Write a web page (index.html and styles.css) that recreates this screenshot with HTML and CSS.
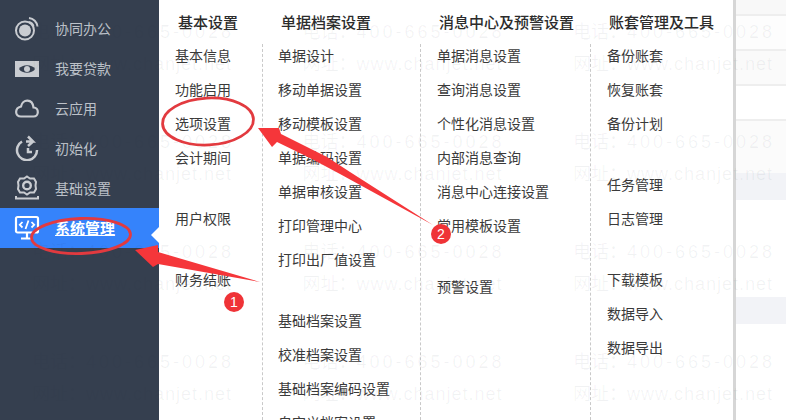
FILE: index.html
```html
<!DOCTYPE html>
<html lang="zh">
<head>
<meta charset="utf-8">
<title>系统管理</title>
<link rel="stylesheet" href="styles.css">
</head>
<body>
<div class="app">
  <nav class="sidebar">
    <a class="nav-item">
      <svg class="nav-icon" viewBox="0 0 26 26"><circle cx="11" cy="15.500" r="9" fill="none" stroke="currentColor" stroke-width="2"/><circle cx="11" cy="15.500" r="6" fill="currentColor"/><path d="M15 3A9.500 9.500 0 0 1 23.500 11.500M15 7A6 6 0 0 1 19.500 11.500" fill="none" stroke="currentColor" stroke-width="2"/></svg>
      <span>协同办公</span>
    </a>
    <a class="nav-item">
      <svg class="nav-icon" viewBox="0 0 26 26"><path d="M1 6H25V22H1Z" fill="currentColor"/><path d="M5 14C8 9 18 9 21 14C18 19 8 19 5 14Z" fill="#353f4f"/><circle cx="13" cy="14" r="3" fill="currentColor"/></svg>
      <span>我要贷款</span>
    </a>
    <a class="nav-item">
      <svg class="nav-icon" viewBox="0 0 26 26"><path d="M7 21.500H19.500C25 21.500 25.500 13 19.500 12.500C18.500 3.500 8.500 3.500 7 11.500C.5 13 .5 21.500 7 21.500Z" fill="none" stroke="currentColor" stroke-width="2.200"/></svg>
      <span>云应用</span>
    </a>
    <a class="nav-item">
      <svg class="nav-icon" viewBox="0 0 26 26"><path d="M8 6.500A10 10 0 1 0 23 15" fill="none" stroke="currentColor" stroke-width="2.500"/><path d="M12 6.500H19L14 1.500M19 6.500L14 11" fill="none" stroke="currentColor" stroke-width="2.500"/><path d="M14 13V17H18" fill="none" stroke="currentColor" stroke-width="2.500"/></svg>
      <span>初始化</span>
    </a>
    <a class="nav-item">
      <svg class="nav-icon" viewBox="0 0 26 26"><path d="M13 1.500L16 3.500L20 3.500L22 7L21.500 10.500L22 14L20 17.500L16 17.500L13 19.500L10 17.500L6 17.500L4 14L4.500 10.500L4 7L6 3.500L10 3.500Z" fill="none" stroke="currentColor" stroke-width="2"/><circle cx="13" cy="10.500" r="3.800" fill="none" stroke="currentColor" stroke-width="2.400"/><path d="M2 21V23.500H24V21" fill="none" stroke="currentColor" stroke-width="2"/></svg>
      <span>基础设置</span>
    </a>
    <a class="nav-item nav-item-active">
      <svg class="nav-icon" viewBox="0 0 26 26"><rect x="2" y="2" width="22" height="15.500" rx="1.500" fill="none" stroke="currentColor" stroke-width="2.200"/><path d="M8.500 7L5.800 9.800L8.500 12.500M17.500 7L20.200 9.800L17.500 12.500M14.500 5.500L11.500 14" fill="none" stroke="currentColor" stroke-width="1.800"/><path d="M13 17.500V23M7 23.500H19" fill="none" stroke="currentColor" stroke-width="2.200"/></svg>
      <span>系统管理</span>
    </a>
  </nav>

  <section class="menu">
    <div class="menu-col menu-col-1">
      <h3 class="menu-title">基本设置</h3>
      <div class="menu-list">
        <ul class="menu-group"><li>基本信息</li><li>功能启用</li><li>选项设置</li><li>会计期间</li></ul>
        <ul class="menu-group"><li>用户权限</li></ul>
        <ul class="menu-group"><li>财务结账</li></ul>
      </div>
    </div>
    <div class="menu-col menu-col-2">
      <h3 class="menu-title">单据档案设置</h3>
      <div class="menu-list">
        <ul class="menu-group"><li>单据设计</li><li>移动单据设置</li><li>移动模板设置</li><li>单据编码设置</li><li>单据审核设置</li><li>打印管理中心</li><li>打印出厂值设置</li></ul>
        <ul class="menu-group"><li>基础档案设置</li><li>校准档案设置</li><li>基础档案编码设置</li><li>自定义档案设置</li></ul>
      </div>
    </div>
    <div class="menu-col menu-col-3">
      <h3 class="menu-title">消息中心及预警设置</h3>
      <div class="menu-list">
        <ul class="menu-group"><li>单据消息设置</li><li>查询消息设置</li><li>个性化消息设置</li><li>内部消息查询</li><li>消息中心连接设置</li><li>常用模板设置</li></ul>
        <ul class="menu-group"><li>预警设置</li></ul>
      </div>
    </div>
    <div class="menu-col menu-col-4">
      <h3 class="menu-title">账套管理及工具</h3>
      <div class="menu-list">
        <ul class="menu-group"><li>备份账套</li><li>恢复账套</li><li>备份计划</li></ul>
        <ul class="menu-group"><li>任务管理</li><li>日志管理</li></ul>
        <ul class="menu-group"><li>下载模板</li><li>数据导入</li><li>数据导出</li></ul>
      </div>
    </div>
  </section>

  <aside class="backdrop">
    <div class="row row-a"></div>
    <div class="row row-b"></div>
    <div class="row row-c"></div>
    <div class="row row-d"></div>
    <div class="row row-e"></div>
    <div class="row row-band"></div>
    <div class="row row-f"></div>
    <div class="row row-band"></div>
  </aside>
</div>

<div class="watermarks">
  <div class="wm"><p>电话：<span class="wm-tel">400-665-0028</span></p><p>网址：<span class="wm-url">www.chanjet.net</span></p></div>
  <div class="wm"><p>电话：<span class="wm-tel">400-665-0028</span></p><p>网址：<span class="wm-url">www.chanjet.net</span></p></div>
  <div class="wm"><p>电话：<span class="wm-tel">400-665-0028</span></p><p>网址：<span class="wm-url">www.chanjet.net</span></p></div>
  <div class="wm"><p>电话：<span class="wm-tel">400-665-0028</span></p><p>网址：<span class="wm-url">www.chanjet.net</span></p></div>
  <div class="wm"><p>电话：<span class="wm-tel">400-665-0028</span></p><p>网址：<span class="wm-url">www.chanjet.net</span></p></div>
  <div class="wm"><p>电话：<span class="wm-tel">400-665-0028</span></p><p>网址：<span class="wm-url">www.chanjet.net</span></p></div>
  <div class="wm"><p>电话：<span class="wm-tel">400-665-0028</span></p><p>网址：<span class="wm-url">www.chanjet.net</span></p></div>
  <div class="wm"><p>电话：<span class="wm-tel">400-665-0028</span></p><p>网址：<span class="wm-url">www.chanjet.net</span></p></div>
  <div class="wm"><p>电话：<span class="wm-tel">400-665-0028</span></p><p>网址：<span class="wm-url">www.chanjet.net</span></p></div>
  <div class="wm"><p>电话：<span class="wm-tel">400-665-0028</span></p><p>网址：<span class="wm-url">www.chanjet.net</span></p></div>
  <div class="wm"><p>电话：<span class="wm-tel">400-665-0028</span></p><p>网址：<span class="wm-url">www.chanjet.net</span></p></div>
  <div class="wm"><p>电话：<span class="wm-tel">400-665-0028</span></p><p>网址：<span class="wm-url">www.chanjet.net</span></p></div>
</div>

<svg class="annotations" viewBox="0 0 786 420">
  <ellipse class="ring" cx="81" cy="236" rx="49.500" ry="17.500" transform="rotate(-2 81 236)"/>
  <ellipse class="ring" cx="208" cy="121.500" rx="45.500" ry="23.500" transform="rotate(-3 208 121.500)"/>
  <polygon class="arrow" points="135,250 158,245 158,252 260,282 158,264 153,267"/>
  <polygon class="arrow" points="258,128 279,128 281,134 327,157 350,172 433,225 340,174 310,158 277,142 272,147"/>
</svg>
<div class="badge badge-1">1</div>
<div class="badge badge-2">2</div>
</body>
</html>
```
FILE: styles.css
```css
* { box-sizing: border-box; }
html, body { margin: 0; height: 100%; overflow: hidden; background: #fff; }
body { position: relative; font-family: "Noto Sans CJK SC", "Liberation Sans", sans-serif; font-size: 14px; color: #333; }
h3, ul, p { margin: 0; padding: 0; }
ul { list-style: none; }

.app { display: flex; height: 420px; overflow: hidden; }

.sidebar { flex: 0 0 159px; padding-top: 8px; background: #353f4f; color: #bcc1c8; }
.nav-item { position: relative; display: flex; align-items: center; gap: 15px; height: 40px; padding-left: 14px; line-height: 20px; }
.nav-icon { display: block; flex: 0 0 26px; width: 26px; height: 26px; color: #c9ccd1; }
.nav-item-active { background: #3583fb; color: #fff; font-size: 15px; font-weight: 700; text-decoration: underline; }
.nav-item-active .nav-icon { color: #fff; }
.nav-item-active::after { content: ""; position: absolute; right: 0; top: 19px; border: 8px solid transparent; border-left-width: 0; border-right-color: #fff; }

.menu { flex: 0 0 577px; display: grid; grid-template-columns: 103px 158px 170px 143px; background: #fff; border-right: 3px solid #d6d6d6; }
.menu-col { min-width: 0; }
.menu-title { height: 44px; padding: 11px 0 0 19px; font-size: 15px; line-height: 22px; font-weight: 500; white-space: nowrap; color: #2c2c2c; }
.menu-list { height: 376px; overflow: hidden; padding: 0 0 0 16px; border-left: 1px dashed #c9c9c9; }
.menu-col-1 .menu-list { border-left: 0; }
.menu-col-2 .menu-list { padding-left: 15px; }
.menu-group { margin-bottom: 27px; }
.menu-group li { height: 34px; line-height: 22px; white-space: nowrap; color: #3a3a3a; }

.backdrop { flex: 1; min-width: 0; background: #fff; }
.row { border-bottom: 2px solid #eeeeee; }
.row-a { height: 16px; background: #f8f8f8; }
.row-b { height: 35px; background: #fdfdfd; }
.row-c { height: 35px; background: #fafafa; }
.row-d { height: 35px; background: #fff; }
.row-e { height: 52px; background: #fbfbfb; border-bottom: 0; }
.row-band { height: 27px; background: #f2f3f7; border-bottom: 0; }
.row-f { height: 97px; background: #fff; border-bottom: 0; }

.watermarks { position: absolute; left: 32px; top: 15px; width: 754px; height: 405px; overflow: hidden; display: grid; grid-template-columns: repeat(3, 270.500px); grid-auto-rows: 110px; color: rgba(45, 55, 75, .06); font-size: 18px; line-height: 30px; pointer-events: none; white-space: nowrap; }
.wm { min-width: 0; }
.wm-tel { letter-spacing: 3px; font-family: "Liberation Sans", sans-serif; }
.wm-url { letter-spacing: 1px; font-family: "Liberation Sans", sans-serif; }

.annotations { position: absolute; left: 0; top: 0; width: 786px; height: 420px; pointer-events: none; }
.ring { fill: none; stroke: #e23a3f; stroke-width: 2.800; }
.arrow { fill: #f5363a; }

.badge { position: absolute; display: flex; align-items: center; justify-content: center; width: 20px; height: 20px; border-radius: 50%; background: #ef3337; color: #fff; font-family: "Liberation Sans", sans-serif; font-size: 14px; line-height: 20px; }
.badge-1 { left: 224px; top: 292px; }
.badge-2 { left: 431px; top: 224px; }
```
